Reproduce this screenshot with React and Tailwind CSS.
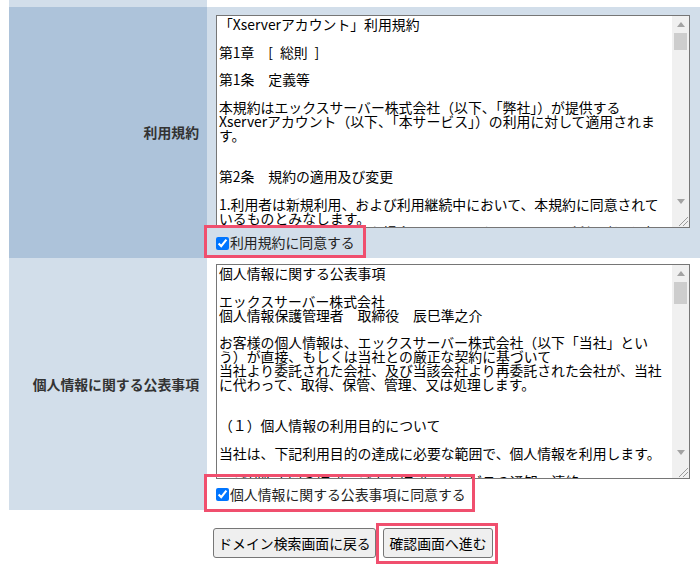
import React from "react";

const termsLines = [
  "「Xserverアカウント」利用規約",
  "",
  "第1章　[\u2002総則\u2002]",
  "",
  "第1条　定義等",
  "",
  "本規約はエックスサーバー株式会社（以下、「弊社」）が提供する",
  "Xserverアカウント（以下、「本サービス」）の利用に対して適用されま",
  "す。",
  "",
  "",
  "第2条　規約の適用及び変更",
  "",
  "1.利用者は新規利用、および利用継続中において、本規約に同意されて",
  "いるものとみなします。",
  "2.弊社は、必要と判断した場合には、エックスサーバーが利用者に通知",
];

const privacyLines = [
  "個人情報に関する公表事項",
  "",
  "エックスサーバー株式会社",
  "個人情報保護管理者　取締役　辰巳準之介",
  "",
  "お客様の個人情報は、エックスサーバー株式会社（以下「当社」とい",
  "う）が直接、もしくは当社との厳正な契約に基づいて",
  "当社より委託された会社、及び当該会社より再委託された会社が、当社",
  "に代わって、取得、保管、管理、又は処理します。",
  "",
  "",
  "（１）個人情報の利用目的について",
  "",
  "当社は、下記利用目的の達成に必要な範囲で、個人情報を利用します。",
  "",
  "・ご契約内容の確認、ご本人確認、サービスの通知、連絡",
];

function Scrollbar({ thumb }) {
  return (
    <div className="flex w-[17px] shrink-0 flex-col bg-[#f0f0f0]">
      <div className="flex h-[17px] items-center justify-center">
        <svg width="8" height="5" viewBox="0 0 8 5">
          <polygon points="4,0 8,5 0,5" fill="#a3a3a3" />
        </svg>
      </div>
      <div className={`mx-[2px] bg-[#cdcdcd] ${thumb}`} />
      <div className="flex-1" />
      <div className="flex h-[17px] items-center justify-center">
        <svg width="8" height="5" viewBox="0 0 8 5">
          <polygon points="0,0 8,0 4,5" fill="#a3a3a3" />
        </svg>
      </div>
      <div className="h-[17px]">
        <svg width="17" height="17" viewBox="0 0 17 17">
          <line x1="16" y1="7" x2="7" y2="16" stroke="#9a9a9a" strokeWidth="1" />
          <line x1="16" y1="11" x2="11" y2="16" stroke="#9a9a9a" strokeWidth="1" />
        </svg>
      </div>
    </div>
  );
}

function TextBox({ lines, height, thumb }) {
  return (
    <div className={`flex w-[474px] border border-[#767676] bg-white ${height}`}>
      <div className="flex-1 overflow-hidden whitespace-pre pl-[2px] pt-[2px] text-[13.87px] leading-[13.87px] text-black">
        {lines.map((line, i) => (
          <div key={i} className="h-[13.87px]">
            {line}
          </div>
        ))}
      </div>
      <Scrollbar thumb={thumb} />
    </div>
  );
}

function Agree({ text, line, box }) {
  return (
    <div className={`relative flex items-center ${line}`}>
      <input type="checkbox" defaultChecked className="m-0 mr-[1px] h-[13px] w-[13px] accent-[#0075ff]" />
      <span className="text-[13.87px] leading-none text-[#222]">{text}</span>
      <span className={`pointer-events-none absolute border-[3px] border-[#f04f6e] ${box}`} />
    </div>
  );
}

export default function App() {
  return (
    <div className="h-[583px] w-[700px] overflow-hidden bg-white font-['Noto_Sans_CJK_JP',sans-serif]">
      <div className="ml-[9px]">
        {/* end of previous row */}
        <div className="flex h-[7px]">
          <div className="w-[198px] bg-[#d2deea]" />
          <div className="flex-1 bg-white" />
        </div>

        {/* 利用規約 */}
        <div className="flex h-[251px]">
          <div className="flex w-[198px] items-center justify-end bg-[#adc3da] pr-[8px] text-[13.87px] font-bold text-[#333]">
            利用規約
          </div>
          <div className="flex-1 bg-[#d2deea] pl-[9px] pt-[8px]">
            <TextBox lines={termsLines} height="h-[213px]" thumb="h-[17px]" />
            <Agree
              text="利用規約に同意する"
              line="h-[30px]"
              box="left-[-12px] top-[-3px] h-[33px] w-[162px]"
            />
          </div>
        </div>

        {/* 個人情報に関する公表事項 */}
        <div className="flex h-[252px]">
          <div className="flex w-[198px] items-center justify-end bg-[#d2deea] pr-[8px] text-[13.87px] font-bold text-[#333]">
            個人情報に関する公表事項
          </div>
          <div className="flex-1 bg-white pl-[9px] pt-[6px]">
            <TextBox lines={privacyLines} height="h-[215px]" thumb="h-[22px]" />
            <Agree
              text="個人情報に関する公表事項に同意する"
              line="h-[31px]"
              box="left-[-12px] top-[-5px] h-[38px] w-[271px]"
            />
          </div>
        </div>

        {/* buttons */}
        <div className="mt-[18px] flex w-[688px] justify-center gap-[7px]">
          <button className="h-[30px] w-[163px] rounded-[3px] border border-[#767676] bg-[#efefef] text-[13.87px] text-black">
            ドメイン検索画面に戻る
          </button>
          <div className="relative">
            <button className="h-[30px] w-[110px] rounded-[3px] border border-[#767676] bg-[#efefef] text-[13.87px] text-black">
              確認画面へ進む
            </button>
            <span className="pointer-events-none absolute left-[-7px] top-[-5px] h-[41px] w-[122px] border-[3px] border-[#f04f6e]" />
          </div>
        </div>
      </div>
    </div>
  );
}
